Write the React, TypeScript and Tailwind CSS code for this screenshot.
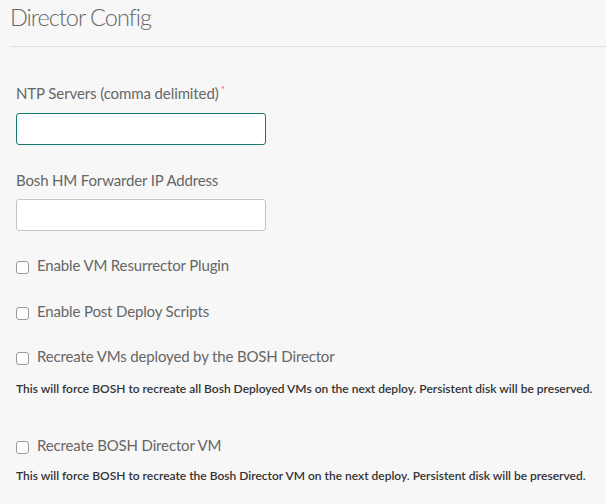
import React from "react";

function Check({ label }: { label: string }) {
  return (
    <label className="flex h-[20px] items-center gap-[8px]">
      <span className="mt-[5px] block h-[13px] w-[13px] shrink-0 rounded-[3px] border border-[#9a9a9a] bg-white" />
      <span className="text-[15px] leading-[20px] tracking-[-0.15px] text-[#666]">{label}</span>
    </label>
  );
}

export default function App() {
  return (
    <div
      className="min-h-[504px] w-[606px] overflow-hidden bg-[#f7f7f7] pl-[10px]"
      style={{ fontFamily: "Lato, 'Open Sans', sans-serif" }}
    >
      <div className="flex h-[46px] items-start">
        <h1 className="mt-[2px] text-[23.5px] font-light leading-[30px] tracking-[-1px] text-[#666]">
          Director Config
        </h1>
      </div>
      <div className="h-px bg-[#e0e0e0]" />
      <div className="pl-[6px]">
        <div className="mt-[36px] flex h-[20px] items-center text-[15px] leading-[20px] tracking-[-0.1px] text-[#666]">
          NTP Servers (comma delimited)
          <span className="mb-[8px] ml-[2px] text-[10px] leading-none text-[#e5615a]">*</span>
        </div>
        <div className="mt-[10px] h-[32px] w-[250px] rounded-[3px] border border-[#17786c] bg-white" />
        <div className="mt-[25px] flex h-[20px] items-center text-[15px] leading-[20px] tracking-[-0.15px] text-[#666]">
          Bosh HM Forwarder IP Address
        </div>
        <div className="mt-[9px] h-[32px] w-[250px] rounded-[3px] border border-[#c4c4c4] bg-white" />
        <div className="mt-[24px]">
          <Check label="Enable VM Resurrector Plugin" />
        </div>
        <div className="mt-[26px]">
          <Check label="Enable Post Deploy Scripts" />
        </div>
        <div className="mt-[25px]">
          <Check label="Recreate VMs deployed by the BOSH Director" />
        </div>
        <div className="mt-[14px] whitespace-nowrap text-[12px] font-semibold leading-[18px] tracking-[0px] text-[#333]">
          This will force BOSH to recreate all Bosh Deployed VMs on the next deploy. Persistent disk will be preserved.
        </div>
        <div className="mt-[37px]">
          <Check label="Recreate BOSH Director VM" />
        </div>
        <div className="mt-[12px] whitespace-nowrap text-[12px] font-semibold leading-[18px] tracking-[0px] text-[#333]">
          This will force BOSH to recreate the Bosh Director VM on the next deploy. Persistent disk will be preserved.
        </div>
      </div>
    </div>
  );
}
